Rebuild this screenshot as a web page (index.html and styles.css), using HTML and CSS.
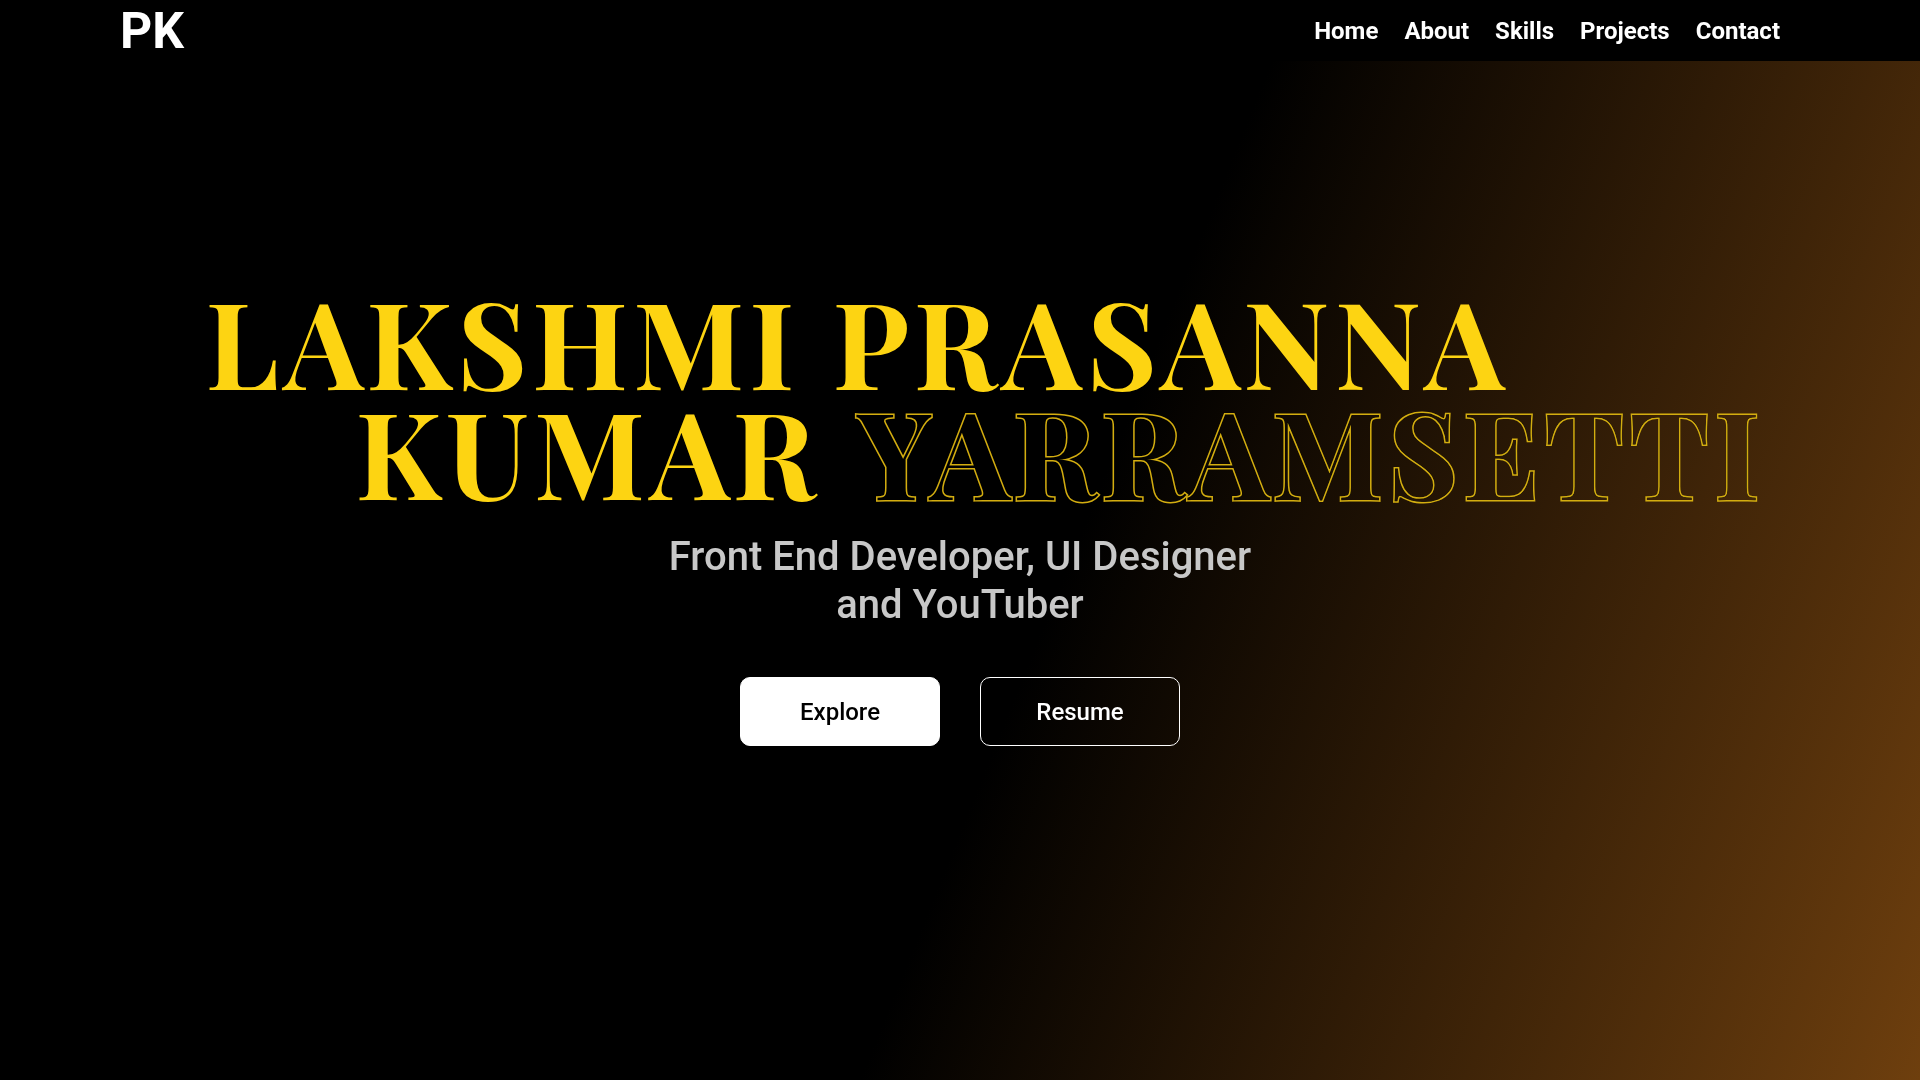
FILE: index.html
```html
<!DOCTYPE html>
<html lang="en">
<head>
  <meta charset="utf-8">
  <meta name="viewport" content="width=device-width, initial-scale=1">
  <title>PK</title>
  <link rel="stylesheet" href="styles.css">
</head>
<body>
  <header class="navbar">
    <a class="logo" href="#home">PK</a>
    <nav class="menu">
      <a href="#home">Home</a>
      <a href="#about">About</a>
      <a href="#skills">Skills</a>
      <a href="#projects">Projects</a>
      <a href="#contact">Contact</a>
    </nav>
  </header>
  <main class="hero" id="home">
    <h1 class="name">
      <span class="name-row">LAKSHMI PRASANNA</span>
      <span class="name-row name-row-second">KUMAR <span class="outlined">YARRAMSETTI</span></span>
    </h1>
    <p class="tagline">Front End Developer, UI Designer and YouTuber</p>
    <div class="actions">
      <button class="button button-solid" type="button">Explore</button>
      <button class="button button-ghost" type="button">Resume</button>
    </div>
  </main>
</body>
</html>
```
FILE: styles.css
```css
* {
  box-sizing: border-box;
}

body {
  margin: 0;
  min-height: 100vh;
  display: flex;
  flex-direction: column;
  color: #fff;
  font-family: Roboto, "Liberation Sans", sans-serif;
  background: #000 linear-gradient(112deg, #000 55%, #6e3f0e 100%);
}

.navbar {
  display: flex;
  justify-content: space-between;
  align-items: center;
  padding: 0 140px 0 120px;
  background: #000;
}

.navbar a {
  color: #fff;
  text-decoration: none;
  font-weight: 700;
}

.navbar .logo {
  padding-top: 1px;
  font-size: 50px;
  line-height: 60px;
}

.menu {
  display: flex;
  gap: 26px;
  font-size: 24px;
}

.hero {
  flex: 1;
  display: flex;
  flex-direction: column;
  align-items: center;
  justify-content: center;
  padding-bottom: 110px;
}

.name {
  margin: 0 0 28px;
  padding-left: 50px;
  color: #fdd412;
  font-family: "Playfair Display", "Liberation Serif", serif;
  font-size: 120px;
  font-weight: 700;
  letter-spacing: 5px;
  line-height: 110px;
  white-space: nowrap;
}

.name-row {
  display: block;
}

.name-row-second {
  padding-left: 150px;
}

/* Black fill hides the inner contours; lighten lets the backdrop through it. */
.outlined {
  margin-left: 5px;
  color: #000;
  -webkit-text-stroke: 3px #d3ad10;
  paint-order: stroke fill;
  mix-blend-mode: lighten;
}

.tagline {
  max-width: 600px;
  margin: 0 0 48px;
  color: #c8c8c8;
  font-size: 40px;
  font-weight: 500;
  line-height: 48px;
  text-align: center;
}

.actions {
  display: flex;
  gap: 40px;
}

.button {
  width: 200px;
  height: 69px;
  border: 1px solid #fff;
  border-radius: 10px;
  font-family: inherit;
  font-size: 24px;
  font-weight: 500;
}

.button-solid {
  color: #000;
  background: #fff;
}

.button-ghost {
  color: #fff;
  background: transparent;
}
```
